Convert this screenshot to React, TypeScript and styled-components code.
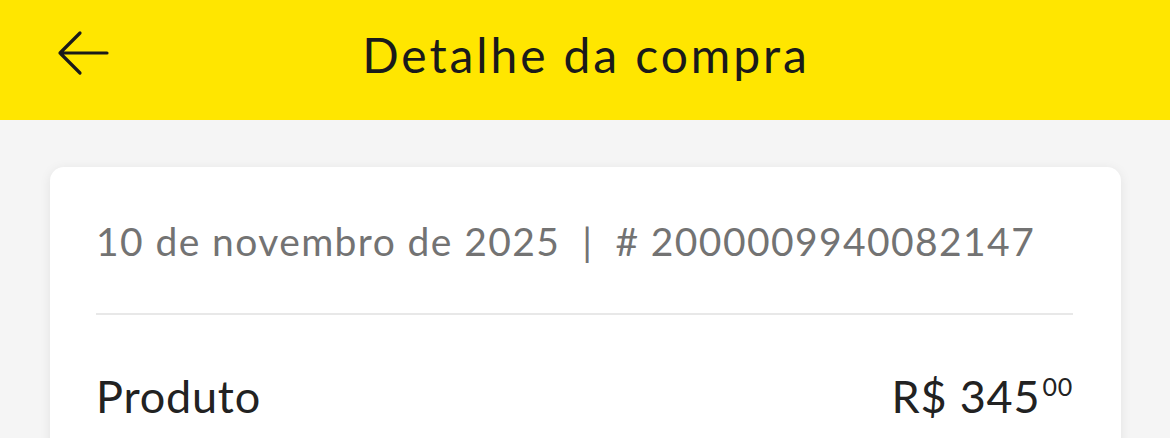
import React, { FC } from "react";
import styled, { createGlobalStyle } from "styled-components";

const GlobalStyle = createGlobalStyle`
  html, body {
    margin: 0;
    padding: 0;
    background: #f5f5f5;
    font-family: Lato, "Noto Sans", sans-serif;
  }
`;

const Page = styled.div`
  width: 1170px;
  height: 438px;
  overflow: hidden;
  background: #f5f5f5;
`;

const Header = styled.header`
  height: 120px;
  background: #ffe600;
  display: flex;
  align-items: center;
  position: relative;
`;

const BackButton = styled.button`
  position: absolute;
  left: 52px;
  top: 26px;
  width: 62px;
  height: 54px;
  border: none;
  background: none;
  padding: 0;
  display: flex;
  align-items: center;
  justify-content: center;
`;

const Title = styled.h1`
  margin: 0 auto;
  padding: 0 0 12px 2px;
  font-size: 48px;
  font-weight: 400;
  letter-spacing: 2.9px;
  color: #1a1a1a;
`;

const Content = styled.main`
  padding: 47px 49px 0 50px;
`;

const Card = styled.section`
  background: #ffffff;
  border-radius: 14px;
  box-shadow: 0 2px 12px rgba(0, 0, 0, 0.08);
  padding: 0 48px 0 46px;
  height: 400px;
`;

const MetaRow = styled.div`
  height: 148px;
  display: flex;
  align-items: center;
  border-bottom: 2px solid #e8e8e8;
  font-size: 39px;
  letter-spacing: 1.4px;
  color: #737373;
  padding-top: 2px;
  box-sizing: border-box;
`;

const Separator = styled.span`
  margin: 0 22px;
`;

const ItemRow = styled.div`
  display: flex;
  justify-content: space-between;
  align-items: baseline;
  padding-top: 54px;
  font-size: 45px;
  letter-spacing: 0.8px;
  color: #222222;
`;

const Price = styled.span`
  display: inline-flex;
  align-items: flex-start;
`;

const Cents = styled.sup`
  font-size: 25px;
  line-height: 1;
  margin-left: 2px;
  margin-top: 5px;
`;

const ArrowIcon: FC = () => (
  <svg width="54" height="46" viewBox="0 0 54 46" fill="none">
    <path
      d="M51 23H4M24 3L4 23l20 20"
      stroke="#1a1a1a"
      strokeWidth="3.2"
      strokeLinecap="round"
      strokeLinejoin="round"
    />
  </svg>
);

const App: FC = () => {
  return (
    <Page>
      <GlobalStyle />
      <Header>
        <BackButton aria-label="Voltar">
          <ArrowIcon />
        </BackButton>
        <Title>Detalhe da compra</Title>
      </Header>
      <Content>
        <Card>
          <MetaRow>
            10 de novembro de 2025
            <Separator>|</Separator># 2000009940082147
          </MetaRow>
          <ItemRow>
            <span>Produto</span>
            <Price>
              R$ 345<Cents>00</Cents>
            </Price>
          </ItemRow>
        </Card>
      </Content>
    </Page>
  );
};

export default App;
